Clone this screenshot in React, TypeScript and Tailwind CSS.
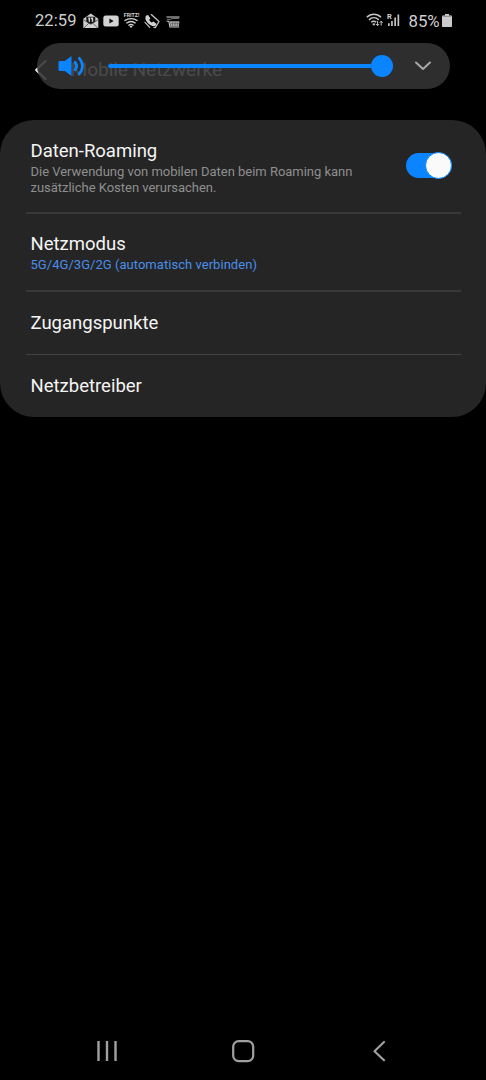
import React from 'react';
import clsx from 'clsx';

interface SettingRowProps {
  title: string;
  className?: string;
  children?: React.ReactNode;
}

const MailIcon = () => (
  <svg className="w-4 h-4 flex-shrink-0" viewBox="0 0 16 16" fill="none">
    <path d="M.3 5.800 7.800.4 15.300 5.800V15H.3Z" fill="#cfcfcf" />
    <path d="M3.300 3.800h9v5L7.800 11.200 3.300 8.800Z" fill="#161616" />
    <path d="M.6 6.800 7.800 11.200l7.200-4.400M.8 15l5-4.800M14.800 15l-5-4.800" stroke="#333" strokeWidth=".7" />
    <path d="M5.200 4.500h1.800v4.300H5.800ZM7.800 4.500h2.400v4.300H8.800V6.300h-1Z" fill="#cfcfcf" />
  </svg>
);

const VideoIcon = () => (
  <svg className="w-4 h-3 flex-shrink-0" viewBox="0 0 16 12">
    <rect x=".3" y=".5" width="15.400" height="11" rx="2.500" fill="#d2d2d2" />
    <path d="m6.400 3.500 4.300 2.500-4.300 2.500Z" fill="#111" />
  </svg>
);

const FritzIcon = () => (
  <svg className="w-[18px] h-[18px] flex-shrink-0 overflow-visible" viewBox="0 0 18 18" fill="none">
    <text
      x=".8"
      y="5.300"
      fill="#d2d2d2"
      fontFamily="Roboto, sans-serif"
      fontSize="6"
      fontWeight="700"
      textLength="15.500"
      lengthAdjust="spacingAndGlyphs"
    >
      FRITZ!
    </text>
    <g stroke="#cfcfcf" strokeWidth="1.400">
      <path d="M1.500 8.800c3.800-2.900 9.200-2.900 13 0" />
      <path d="M3.400 11.300c2.800-2.100 6.400-2.100 9.200 0" />
      <path d="M5.500 13.500c1.500-1.200 3.500-1.200 5 0" />
    </g>
    <path d="m8 16-1.500-1.500c1-.6 2-.6 3 0Z" fill="#cfcfcf" />
  </svg>
);

const CallIcon = () => (
  <svg className="w-4 h-4 flex-shrink-0" viewBox="0 0 16 16" fill="none">
    <path
      d="M2.300 2.600C.8 4 1 6.500 3.200 9.200c2.400 2.900 5.600 4.300 7.900 3.800l1.500-1.900-3.100-2.600-1.700 1C6.500 8.900 5.500 7.900 5.100 6.700l1.300-1.300L4.100 1.900Z"
      fill="#d2d2d2"
    />
    <path d="m7 1.200 8 7.300-3.700 6.200-2-.7" stroke="#c4c4c4" strokeWidth="1.300" strokeLinejoin="round" />
    <path d="m1 9.300 4.700 5" stroke="#c4c4c4" strokeWidth="1.200" strokeLinecap="round" />
  </svg>
);

const CartIcon = () => (
  <svg className="w-[14px] h-3 flex-shrink-0" viewBox="0 0 14 12" fill="none">
    <path d="M.5 1h13" stroke="#c4c4c4" strokeWidth="1.100" />
    <path d="M1 3.300h3.500l1.600-.9h7" stroke="#8c8c8c" strokeWidth=".9" />
    <path d="M.5 5.300h2.400l1 5.700h9.300" stroke="#c4c4c4" strokeWidth="1.100" />
    <path d="M3.800 5.300h9.600l-.5 5H4.600Z" fill="#aaa" />
    <path d="M4.500 7.700h8.500M6.500 5.500V10M9 5.500V10M11.400 5.500V10" stroke="#555" strokeWidth=".6" />
  </svg>
);

const WifiIcon = () => (
  <svg className="w-[18px] h-[14px] flex-shrink-0" viewBox="0 0 18 14" fill="none">
    <g stroke="#c4c4c4" strokeWidth="1.500">
      <path d="M.8 4.300C4.900.2 10.900.2 15 4.300" />
      <path d="M3 6.900c2.900-2.800 6.900-2.800 9.800 0" />
      <path d="M5.200 9.300c1.600-1.500 3.600-1.500 5 0" />
    </g>
    <path d="m7.900 12.800-1.700-1.900c1-.8 2.300-.8 3.300 0Z" fill="#c4c4c4" />
    <path d="M11.600 8v4.500M10.100 11l1.500 1.600 1.500-1.600M15.200 12.500V8.200M13.700 9.700l1.500-1.600 1.500 1.600" stroke="#c4c4c4" />
  </svg>
);

const SignalIcon = () => (
  <svg className="w-[14px] h-4 flex-shrink-0" viewBox="0 0 14 16">
    <text x="0" y="6.500" fill="#d2d2d2" fontFamily="Roboto, sans-serif" fontSize="7.500" fontWeight="700">
      R
    </text>
    <path d="M1 11.200h1.700V14H1ZM4.100 9h1.700V14H4.100ZM7.300 5.500h1.700V14H7.300ZM10.500 2.500h1.700V14h-1.700Z" fill="#c4c4c4" />
  </svg>
);

const BatteryIcon = () => (
  <svg className="w-[10px] h-[13px] flex-shrink-0" viewBox="0 0 10 13">
    <path d="M3 0h4v1.500h2c.6 0 1 .4 1 1V12c0 .6-.4 1-1 1H1c-.6 0-1-.4-1-1V2.500c0-.6.4-1 1-1h2Z" fill="#cbcbcb" />
    <path d="M.5 1.800h9V2.800H.5Z" fill="#888" />
  </svg>
);

const StatusBar = () => (
  <div className="flex items-center h-[41px] pl-[35px] pr-[34px] text-[16.5px] leading-none text-[#cfcfcf]">
    <span className="w-[42px] pt-[2px] whitespace-nowrap tracking-[0.1px]">22:59</span>
    <div className="flex items-center ml-[5.5px]">
      <MailIcon />
      <span className="ml-[4.5px]"><VideoIcon /></span>
      <span className="ml-[4px] mt-[1px]"><FritzIcon /></span>
      <span className="ml-[3px]"><CallIcon /></span>
      <span className="ml-[5.5px] mt-[3px]"><CartIcon /></span>
    </div>
    <div className="flex items-center ml-auto">
      <WifiIcon />
      <span className="ml-[3px]"><SignalIcon /></span>
      <span className="ml-[7.5px] w-[32px] pt-[2px] whitespace-nowrap text-[16.8px]">85%</span>
      <span className="ml-[1.5px]"><BatteryIcon /></span>
    </div>
  </div>
);

const VolumePanel = () => (
  <div className="absolute left-[36.5px] top-[2px] flex items-center w-[413px] h-[46px] rounded-full bg-[#343434]/89">
    <svg className="ml-[21px] w-[28px] h-[22px] flex-shrink-0" viewBox="0 0 28 22" fill="none">
      <path d="M1.800 6h5L13.500 1v20L6.800 16h-5C1 16 .5 15.500.5 14.800V7.200C.5 6.500 1 6 1.800 6Z" fill="#0a84ff" />
      <path d="M17 7.200c2 2.300 2 5.300 0 7.600M21.300 3.300c4.100 4.500 4.100 10.900 0 15.400" stroke="#0a84ff" strokeWidth="2.700" strokeLinecap="round" />
    </svg>
    <div className="flex items-center ml-[22.5px] w-[285px]">
      <div className="flex-1 h-1 rounded-l-full bg-[#0a84ff]" />
      <div className="w-[22px] h-[22px] rounded-full bg-[#0a84ff]" />
    </div>
    <svg className="ml-[20.5px] w-[18px] h-[12px]" viewBox="0 0 18 12" fill="none">
      <path d="m2 2.500 7 6.500 7-6.500" stroke="#a8a8a8" strokeWidth="2" strokeLinecap="round" strokeLinejoin="round" />
    </svg>
  </div>
);

const SettingRow: React.FC<SettingRowProps> = ({ title, className, children }) => (
  <div className={clsx('ml-[25.5px] mr-[25px] px-[5px] border-[#383838]', className)}>
    <div className="text-[18.5px] leading-6 text-[#f5f5f5]">{title}</div>
    {children}
  </div>
);

const Toggle = () => (
  <div className="absolute right-[34.5px] top-[33.5px] flex items-center justify-end w-[46px] h-[25px] rounded-full bg-[#0a84ff]">
    <div className="w-[27px] h-[27px] -my-px flex-shrink-0 rounded-full border border-[#0a84ff] bg-[#fafafa]" />
  </div>
);

export default function App() {
  return (
    <div className="flex flex-col w-[486px] h-[1080px] overflow-hidden bg-black font-['Roboto',sans-serif]">
      <StatusBar />

      <header className="relative flex items-center h-[78.5px] pb-[21.5px] pl-[33.5px]">
        <svg className="w-[14px] h-[22px]" viewBox="0 0 14 22" fill="none">
          <path d="M11.500 2 2.200 11l9.300 9" stroke="#f5f5f5" strokeWidth="2.200" strokeLinecap="round" strokeLinejoin="round" />
        </svg>
        <h1 className="ml-[23px] text-[19.2px] leading-6 tracking-[-0.1px] whitespace-nowrap text-[#f5f5f5]">Mobile Netzwerke</h1>
        <VolumePanel />
      </header>

      <main className="relative h-[297.5px] rounded-[34px] bg-[#252525]">
        <SettingRow title="Daten-Roaming" className="h-[94px] pt-[19.5px] border-b-2">
          <p className="mt-[1px] w-[340px] text-[13px] leading-[15.5px] tracking-[-0.02px] text-[#8f8f8f]">
            Die Verwendung von mobilen Daten beim Roaming kann zusätzliche Kosten verursachen.
          </p>
        </SettingRow>
        <SettingRow title="Netzmodus" className="h-[78px] pt-[18.5px] border-b-2">
          <p className="text-[13px] leading-[18px] tracking-[0.04px] text-[#4a8ee8]">5G/4G/3G/2G (automatisch verbinden)</p>
        </SettingRow>
        <SettingRow title="Zugangspunkte" className="h-[63px] pt-[19.5px] border-b border-[#424242]" />
        <SettingRow title="Netzbetreiber" className="h-[62px] pt-[19.5px]" />
        <Toggle />
      </main>

      <nav className="flex items-center justify-between mt-auto h-[58px] pl-[96px] pr-[99px]">
        <svg className="w-[22px] h-[22px]" viewBox="0 0 22 22">
          <path d="M2.500 1v20M11 1v20M19.500 1v20" stroke="#a0a0a0" strokeWidth="2.400" />
        </svg>
        <svg className="-ml-[4px] w-6 h-6" viewBox="0 0 24 24" fill="none">
          <rect x="2.200" y="2.200" width="20" height="20" rx="5.500" stroke="#a0a0a0" strokeWidth="2.200" />
        </svg>
        <svg className="w-[16px] h-[22px]" viewBox="0 0 16 22" fill="none">
          <path d="M13 2 3.500 11.200l9.500 9" stroke="#a0a0a0" strokeWidth="2.200" strokeLinecap="round" strokeLinejoin="round" />
        </svg>
      </nav>
    </div>
  );
}
